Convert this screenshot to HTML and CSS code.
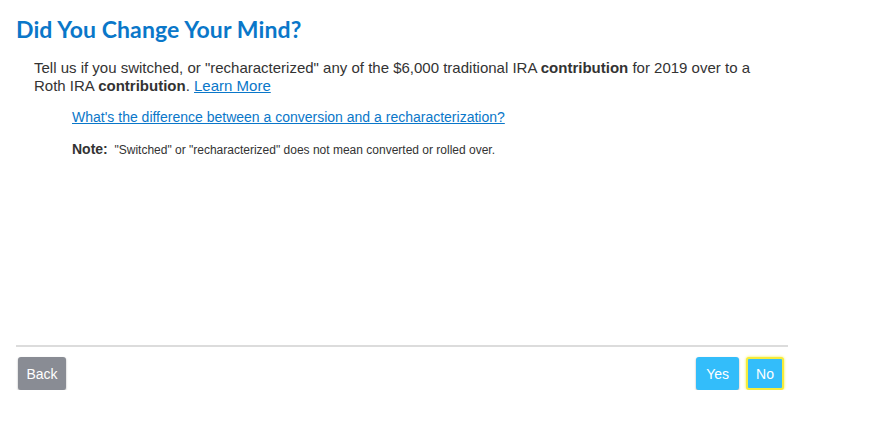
FILE: index.html
```html
<!DOCTYPE html>
<html lang="en">
<head>
    <meta charset="UTF-8">
    <meta name="viewport" content="width=device-width, initial-scale=1.0">
    <title>Did You Change Your Mind?</title>
    <link rel="stylesheet" href="styles.css">
</head>
<body>
    <div class="page">
        <h1 class="title">Did You Change Your Mind?</h1>

        <div class="content">
            <p class="intro">
                Tell us if you switched, or "recharacterized" any of the $6,000 traditional IRA <b>contribution</b> for 2019 over to a
                Roth IRA <b>contribution</b>. <a href="#" class="link">Learn More</a>
            </p>

            <div class="details">
                <a href="#" class="link">What's the difference between a conversion and a recharacterization?</a>
                <p class="note"><b>Note:</b>&nbsp; "Switched" or "recharacterized" does not mean converted or rolled over.</p>
            </div>
        </div>

        <!-- footer with navigation buttons -->
        <div class="footer">
            <button class="button button-back">Back</button>
            <div class="answers">
                <button class="button button-answer">Yes</button>
                <button class="button button-answer button-focus">No</button>
            </div>
        </div>
    </div>
</body>
</html>
```

FILE: styles.css
```css
body {
    margin: 0;
    font-family: 'Liberation Sans', Arial, sans-serif;
    color: #333;
    background: #fff;
}

.page {
    width: 772px;
    padding: 15px 0 0 16px;
}

.title {
    margin: 0;
    font-family: 'Lato', 'Noto Sans', sans-serif;
    font-size: 23px;
    font-weight: 700;
    color: #0a77c9;
    letter-spacing: 0.1px;
}

.content {
    height: 302px;
    padding: 16px 0 0 18px;
    box-sizing: border-box;
}

.intro {
    max-width: 730px;
    margin: 0;
    font-size: 15px;
    line-height: 18px;
}

.link {
    color: #0a77c9;
    text-decoration: underline;
}

.details {
    padding: 14px 0 0 38px;
    font-size: 14px;
    line-height: 17px;
}

.note {
    margin: 15px 0 0;
    font-size: 12px;
    line-height: 16px;
}

.note b {
    font-size: 14px;
}

/* bottom bar */
.footer {
    display: flex;
    justify-content: space-between;
    align-items: flex-start;
    border-top: 2px solid #dcdcdc;
    padding: 10px 4px 0 2px;
}

.answers {
    display: flex;
    gap: 7px;
}

.button {
    height: 33px;
    padding: 0 9px;
    font-family: 'Liberation Sans', Arial, sans-serif;
    font-size: 14px;
    color: #fff;
    border: 1px solid transparent;
    border-radius: 3px;
    box-shadow: 0 1px 2px rgba(0, 0, 0, 0.35);
    cursor: pointer;
}

.button-back {
    width: 48px;
    padding: 0;
    background-color: #898c94;
}

.button-answer {
    background-color: #33bdfa;
}

.button-focus {
    border: 2px solid #f5ec3b;
    padding: 0 8px;
    box-shadow: 0 0 3px #f5ec3b;
}
```
